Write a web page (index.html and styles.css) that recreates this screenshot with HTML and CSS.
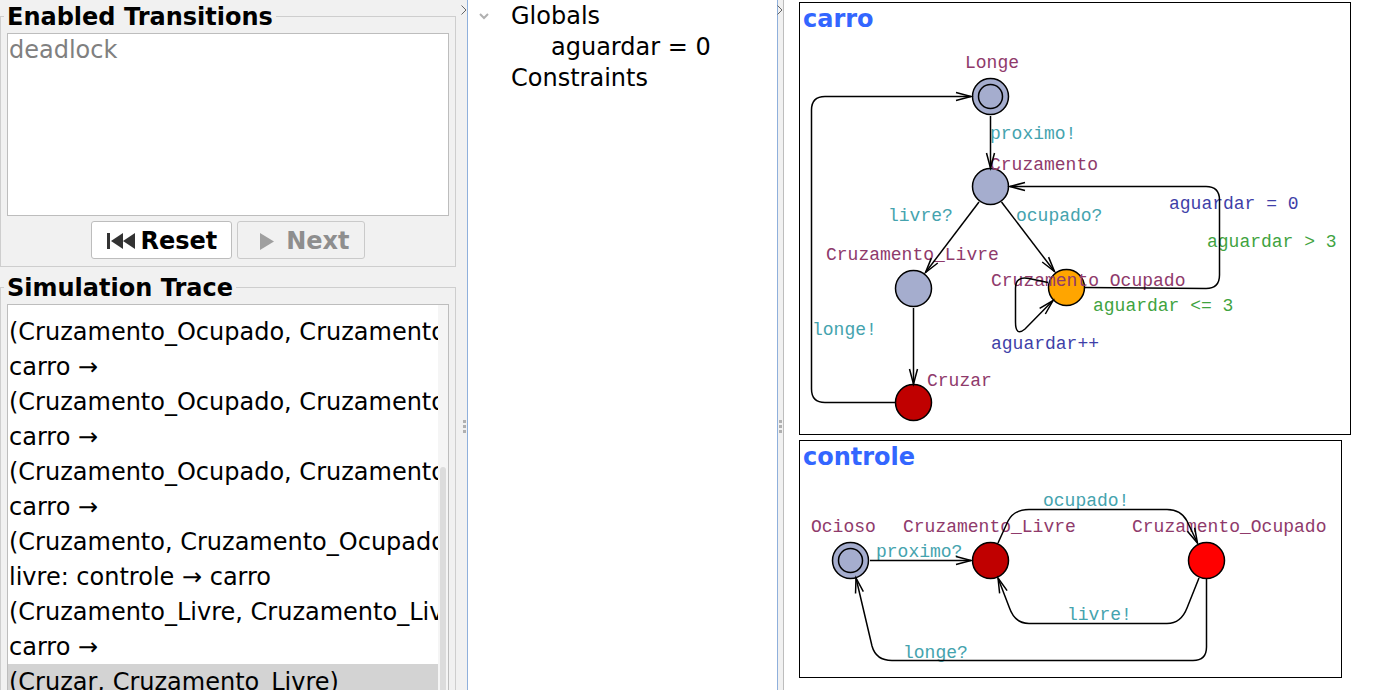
FILE: index.html
```html
<!DOCTYPE html>
<html lang="pt">
<head>
<meta charset="utf-8">
<title>Simulator</title>
<link rel="stylesheet" href="styles.css">
</head>
<body>
<main class="simulator">
  <section class="controls">
    <fieldset class="group">
      <legend>Enabled Transitions</legend>
      <ul class="list transitions">
        <li class="disabled">deadlock</li>
      </ul>
      <div class="actions">
        <button class="btn" type="button">
          <svg class="icon" width="30" height="18" viewBox="0 0 30 18" aria-hidden="true"><path d="M1 1h3v16H1zM17 1v16L5 9zM29 1v16L17 9z"/></svg>
          Reset
        </button>
        <button class="btn" type="button" disabled>
          <svg class="icon" width="30" height="18" viewBox="0 0 30 18" aria-hidden="true"><path d="M8 1v17l14-8.5z"/></svg>
          Next
        </button>
      </div>
    </fieldset>
    <fieldset class="group group-trace">
      <legend>Simulation Trace</legend>
      <div class="trace-box">
        <ol class="list trace">
          <li>(Cruzamento_Ocupado, Cruzamento_Ocupado)</li>
          <li>carro →</li>
          <li>(Cruzamento_Ocupado, Cruzamento_Ocupado)</li>
          <li>carro →</li>
          <li>(Cruzamento_Ocupado, Cruzamento_Ocupado)</li>
          <li>carro →</li>
          <li>(Cruzamento, Cruzamento_Ocupado)</li>
          <li>livre: controle → carro</li>
          <li>(Cruzamento_Livre, Cruzamento_Livre)</li>
          <li>carro →</li>
          <li class="selected">(Cruzar, Cruzamento_Livre)</li>
        </ol>
        <div class="scrollbar"><div class="thumb"></div></div>
      </div>
    </fieldset>
  </section>

  <div class="splitter splitter-left">
    <button class="collapse" type="button" aria-label="Expand panel"><svg width="6" height="10" viewBox="0 0 6 10"><path d="M.5.5 5 5 .5 9.5"/></svg></button>
    <svg class="grip" width="3" height="13" viewBox="0 0 3 13"><path d="M0 0h3v3H0zM0 5h3v3H0zM0 10h3v3H0z"/></svg>
  </div>

  <section class="variables">
    <ul class="tree">
      <li>
        <div class="tree-row"><svg class="chevron" width="10" height="7" viewBox="0 0 10 7" aria-hidden="true"><path d="M1 1l4 4 4-4"/></svg>Globals</div>
        <ul class="tree-children"><li>aguardar = 0</li></ul>
      </li>
      <li><div class="tree-row">Constraints</div></li>
    </ul>
  </section>

  <div class="splitter splitter-right">
    <button class="collapse" type="button" aria-label="Expand panel"><svg width="6" height="10" viewBox="0 0 6 10"><path d="M.5.5 5 5 .5 9.5"/></svg></button>
    <svg class="grip" width="3" height="13" viewBox="0 0 3 13"><path d="M0 0h3v3H0zM0 5h3v3H0zM0 10h3v3H0z"/></svg>
  </div>

  <section class="automata">
    <article class="automaton">
      <h2>carro</h2>
      <svg class="diagram" width="550" height="400" viewBox="800 34 550 400">
        <defs>
          <marker id="arrow" markerUnits="userSpaceOnUse" markerWidth="20" markerHeight="14" refX="16" refY="7" orient="auto" viewBox="0 0 20 14"><path class="head" d="M1 3 16 7 1 11"/></marker>
        </defs>
        <g class="node">
          <circle cx="990.5" cy="96.5" r="18"/><circle cx="990.5" cy="96.5" r="12"/>
          <circle cx="990.5" cy="186.5" r="18"/>
          <circle cx="913.5" cy="288.5" r="18"/>
          <circle class="waiting" cx="1066.5" cy="287.5" r="18"/>
          <circle class="current" cx="913.5" cy="402.5" r="18"/>
        </g>
        <g class="name">
          <text x="965" y="68">Longe</text>
          <text x="990" y="170">Cruzamento</text>
          <text x="826" y="260">Cruzamento_Livre</text>
          <text x="991" y="286">Cruzamento_Ocupado</text>
          <text x="927" y="386">Cruzar</text>
        </g>
        <g class="sync">
          <text x="990" y="139">proximo!</text>
          <text x="888" y="221">livre?</text>
          <text x="1016" y="221">ocupado?</text>
          <text x="812" y="335">longe!</text>
        </g>
        <g class="update">
          <text x="1169" y="209">aguardar = 0</text>
          <text x="991" y="349">aguardar++</text>
        </g>
        <g class="guard">
          <text x="1207" y="247">aguardar &gt; 3</text>
          <text x="1093" y="311">aguardar &lt;= 3</text>
        </g>
        <g class="edge">
          <path d="M895 402.5H825Q811.5 402.5 811.5 389V110Q811.5 96.5 825 96.5H971"/>
          <path d="M990.5 116V168"/>
          <path d="M979 202 925.5 272.5"/>
          <path d="M1001.5 202 1054.5 271.5"/>
          <path d="M913.5 308V384"/>
          <path d="M1085 287.5 1206 288.5Q1219.5 288.5 1219.5 275V200Q1219.5 186.5 1206 186.5H1010"/>
          <path d="M1048 282.5 1029 278.5Q1015.5 276 1015.5 288V322Q1015.5 337 1025 329L1053 300.5"/>
        </g>
      </svg>
    </article>
    <article class="automaton">
      <h2>controle</h2>
      <svg class="diagram" width="541" height="205" viewBox="800 472 541 205">
        <g class="node">
          <circle cx="850.5" cy="560.5" r="18"/><circle cx="850.5" cy="560.5" r="12"/>
          <circle class="current" cx="990.5" cy="560.5" r="18"/>
          <circle class="active" cx="1206.5" cy="560.5" r="18"/>
        </g>
        <g class="name">
          <text x="811" y="532">Ocioso</text>
          <text x="903" y="532">Cruzamento_Livre</text>
          <text x="1132" y="532">Cruzamento_Ocupado</text>
        </g>
        <g class="sync">
          <text x="1043" y="506">ocupado!</text>
          <text x="876" y="557">proximo?</text>
          <text x="1067" y="620">livre!</text>
          <text x="903" y="658">longe?</text>
        </g>
        <g class="edge">
          <path d="M870 560.5H971"/>
          <path d="M998 543 1008 521Q1014 509.5 1029 509.5H1167Q1181 509.5 1187 521L1197.5 543"/>
          <path d="M1199 578 1187 608Q1181 623.5 1167 623.5H1029Q1015 623.5 1009.5 608L998 578"/>
          <path d="M1206.5 579V647Q1206.5 660.5 1193 660.5H892Q876 660.5 872 646L856 578"/>
        </g>
      </svg>
    </article>
  </section>
</main>
</body>
</html>
```
FILE: styles.css
```css
* { box-sizing: border-box; }

body {
  margin: 0;
  background: #f1f1f1;
  color: #000;
  font: 24px/31px "DejaVu Sans", sans-serif;
}

ul, ol { margin: 0; padding: 0; list-style: none; }

.simulator {
  display: grid;
  grid-template-columns: minmax(0, 456fr) 12px minmax(0, 309fr) 7px minmax(0, 609fr);
  height: 100vh;
  overflow: hidden;
}

.controls {
  display: flex;
  flex-direction: column;
  gap: 6px;
  min-width: 0;
  min-height: 0;
  padding-top: 2px;
}

.group {
  min-width: 0;
  margin: 0;
  padding: 3px 6px 7px;
  border: 1px solid #cecece;
}

.group legend {
  margin-left: -3px;
  padding: 2px 3px 0;
  font-weight: bold;
  line-height: 26px;
}

.group-trace {
  flex: 1;
  min-height: 0;
  padding-bottom: 0;
  border-bottom: 0;
}

.list { background: #fff; white-space: nowrap; }

.transitions {
  height: 183px;
  padding: 1px 0 0 1px;
  border: 1px solid #bdbdbd;
}

.disabled { color: #808080; }

.actions {
  display: flex;
  justify-content: center;
  gap: 5px;
  margin-top: 5px;
}

.btn {
  display: flex;
  align-items: center;
  gap: 4px;
  height: 38px;
  padding: 2px 14px 0;
  border: 1px solid #bdbdbd;
  border-radius: 3px;
  background: #fff;
  color: #000;
  font: bold 24px "DejaVu Sans", sans-serif;
}

.btn:disabled {
  border-color: #cacaca;
  background: #f1f1f1;
  color: #8e8e8e;
}

.icon { fill: #333; }
.btn:disabled .icon { fill: #9f9f9f; }

.trace-box {
  display: flex;
  height: 100%;
  border: 1px solid #bdbdbd;
  border-bottom: 0;
  overflow: hidden;
}

.trace {
  flex: 1;
  min-width: 0;
  padding-top: 9px;
  overflow: hidden;
  line-height: 33px;
}

.trace li { padding: 2px 0 0 1px; }
.trace .selected { background: #d3d3d3; }

.scrollbar {
  width: 10px;
  padding: 162px 2px 0;
  background: #f5f5f5;
}

.thumb {
  height: 100%;
  border-radius: 3px 3px 0 0;
  background: #dcdcdc;
}

.splitter {
  display: flex;
  flex-direction: column;
  align-items: flex-end;
  padding-top: 5px;
}

.splitter-left { border-right: 1px solid #8fb0dc; }
.splitter-right { border-left: 1px solid #8fb0dc; border-right: 1px solid #bdbdbd; }

.collapse {
  display: flex;
  padding: 0;
  border: 0;
  background: none;
}

.collapse path { fill: none; stroke: #666; stroke-width: 1; }

.grip {
  margin: calc(60vh - 9px) 1px 0;
  fill: #b0b0b0;
}

.variables {
  padding-top: 1px;
  background: #fff;
  overflow: hidden;
  white-space: nowrap;
}

.tree-row { position: relative; padding-left: 43px; }
.tree-children { padding-left: 83px; }

.chevron {
  position: absolute;
  top: 12px;
  left: 11px;
  fill: none;
  stroke: #b0b0b0;
  stroke-width: 2;
}

.automata {
  display: flex;
  flex-direction: column;
  align-items: flex-start;
  gap: 5px;
  padding: 2px 0 0 15px;
  background: #fff;
  overflow: hidden;
}

.automaton { border: 1px solid #000; }

.automaton h2 {
  margin: 0;
  padding: 2px 0 0 3px;
  color: #36f;
  font-size: 24px;
  line-height: 29px;
}

.diagram { display: block; }
.diagram text { font: 18px "Liberation Mono", monospace; }

.node circle { fill: #a5adce; stroke: #000; stroke-width: 1.5; }
.node .waiting { fill: #ffa500; }
.node .current { fill: #c00000; }
.node .active { fill: #f00; }

.name { fill: #8f3a6b; }
.sync { fill: #45a3ae; }
.update { fill: #3f3fa8; }
.guard { fill: #3fa33f; }

.edge path { fill: none; stroke: #000; stroke-width: 1.5; marker-end: url(#arrow); }
.head { fill: none; stroke: #000; stroke-width: 1.5; }
```
